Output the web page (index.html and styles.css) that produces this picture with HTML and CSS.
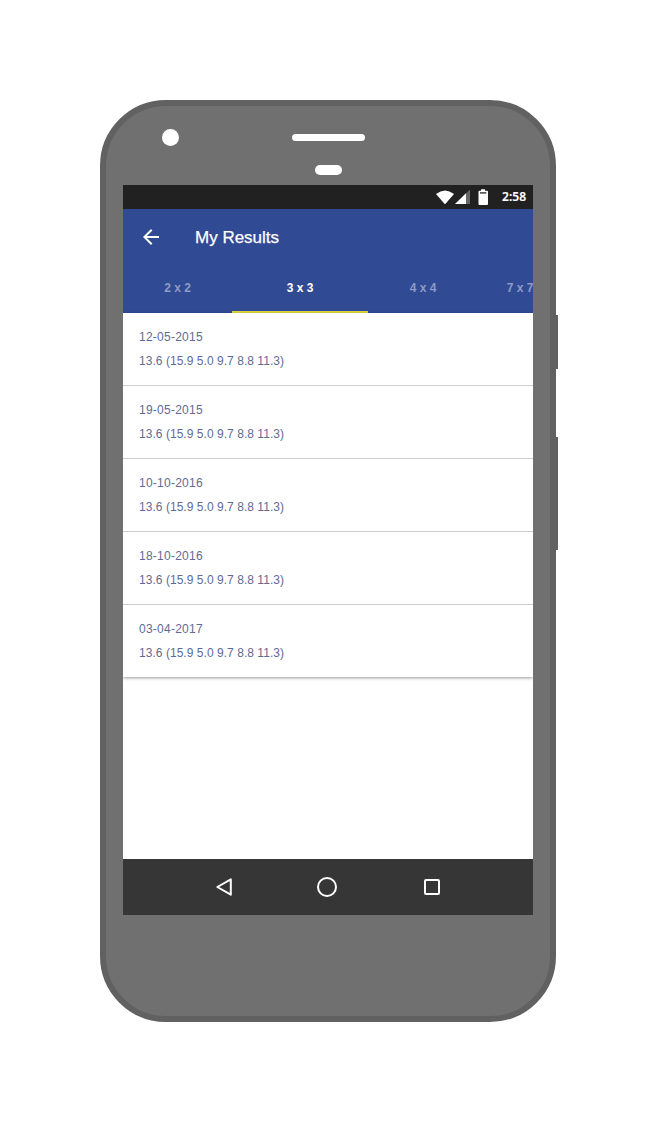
FILE: index.html
```html
<!DOCTYPE html>
<html lang="en">
<head>
<meta charset="utf-8">
<title>My Results</title>
<link rel="stylesheet" href="styles.css">
</head>
<body>
<div class="phone">
  <span class="camera"></span>
  <span class="speaker"></span>
  <span class="sensor"></span>
  <span class="side-button power"></span>
  <span class="side-button volume"></span>
  <main class="screen">
    <div class="status-bar">
      <svg class="status-icons" width="54" height="18" viewBox="0 0 54 18">
        <path fill="#fff" d="M0 6Q9 -1.100 18 6L9.300 16H8.700Z"/>
        <path fill="#666" d="M34 1.500V16H19.500Z"/>
        <path fill="#fff" d="M19 16L30 5.200V16Z"/>
        <path fill="#fff" d="M45 1.300h4v1.500h2a1 1 0 0 1 1 1V16a1 1 0 0 1-1 1h-7.500a1 1 0 0 1-1-1V3.800a1 1 0 0 1 1-1H45z"/>
        <path fill="#333" d="M44 4.200h6.300v1.400H44z"/>
      </svg>
      <span class="time">2:58</span>
    </div>
    <header class="app-bar">
      <div class="toolbar">
        <svg class="back" width="24" height="24" viewBox="0 0 24 24"><path fill="#fff" d="M20 11H7.830l5.590-5.590L12 4l-8 8 8 8 1.410-1.410L7.830 13H20v-2z"/></svg>
        <h1 class="title">My Results</h1>
      </div>
      <nav class="tabs">
        <span class="tab">2 x 2</span>
        <span class="tab active">3 x 3</span>
        <span class="tab">4 x 4</span>
        <span class="tab last">7 x 7</span>
      </nav>
    </header>
    <ul class="results">
      <li class="result"><span class="date">12-05-2015</span><span class="times">13.6 (15.9 5.0 9.7 8.8 11.3)</span></li>
      <li class="result"><span class="date">19-05-2015</span><span class="times">13.6 (15.9 5.0 9.7 8.8 11.3)</span></li>
      <li class="result"><span class="date">10-10-2016</span><span class="times">13.6 (15.9 5.0 9.7 8.8 11.3)</span></li>
      <li class="result"><span class="date">18-10-2016</span><span class="times">13.6 (15.9 5.0 9.7 8.8 11.3)</span></li>
      <li class="result"><span class="date">03-04-2017</span><span class="times">13.6 (15.9 5.0 9.7 8.8 11.3)</span></li>
    </ul>
    <footer class="nav-bar">
      <svg width="24" height="24" viewBox="0 0 24 24"><path fill="none" stroke="#fff" stroke-width="2" stroke-linejoin="round" d="M7.300 12L20.800 4.300V19.700Z"/></svg>
      <svg width="24" height="24" viewBox="0 0 24 24"><circle cx="12" cy="12" r="9" fill="none" stroke="#fff" stroke-width="2"/></svg>
      <svg width="24" height="24" viewBox="0 0 24 24"><rect x="5" y="5" width="14" height="14" rx="1" fill="none" stroke="#fff" stroke-width="2"/></svg>
    </footer>
  </main>
</div>
</body>
</html>
```
FILE: styles.css
```css
* { box-sizing: border-box; }
body {
  margin: 0;
  padding: 100px;
  background: #fff;
  font-family: "Liberation Sans", Arial, sans-serif;
}
.phone {
  position: relative;
  width: 456px;
  height: 922px;
  padding: 79px 17px 0;
  border: 6px solid #616161;
  border-radius: 66px;
  background: #707070;
}
.camera, .speaker, .sensor {
  position: absolute;
  background: #fff;
  border-radius: 9px;
}
.camera { left: 56px; top: 23px; width: 17px; height: 17px; }
.speaker { left: 186px; top: 28px; width: 73px; height: 7px; }
.sensor { left: 209px; top: 59px; width: 27px; height: 10px; }
.side-button {
  position: absolute;
  right: -8px;
  width: 2px;
  background: #616161;
}
.power { top: 209px; height: 54px; }
.volume { top: 331px; height: 113px; }
.screen {
  display: flex;
  flex-direction: column;
  width: 410px;
  height: 730px;
  overflow: hidden;
  background: #fff;
}
.status-bar {
  display: flex;
  align-items: center;
  justify-content: flex-end;
  gap: 12px;
  height: 24px;
  padding-right: 7px;
  background: #212121;
}
.time {
  color: #fff;
  font: 600 12px/24px "Noto Sans", "Open Sans", sans-serif;
  -webkit-text-stroke: 0.15px #fff;
}
.app-bar { height: 104px; background: #304a94; color: #fff; }
.toolbar {
  display: flex;
  align-items: center;
  gap: 32px;
  height: 56px;
  padding-left: 16px;
}
.title {
  margin: 0;
  padding-top: 2px;
  font-size: 17px;
  font-weight: 400;
  -webkit-text-stroke: 0.25px #fff;
}
.tabs { display: flex; height: 48px; }
.tab {
  flex: 0 0 110px;
  color: #8d9bc5;
  font-size: 12px;
  font-weight: 700;
  line-height: 46px;
  text-align: center;
}
.tab:first-child { flex-basis: 109px; }
.tab.active {
  flex-basis: 136px;
  color: #fff;
  border-bottom: 2px solid #dfd63c;
}
.tab.last { flex-basis: 84px; }
.results {
  margin: 0;
  padding: 0;
  list-style: none;
  box-shadow: 0 1px 3px rgba(0, 0, 0, 0.4);
}
.result {
  display: flex;
  flex-direction: column;
  height: 73px;
  padding: 12px 16px;
  border-bottom: 1px solid #cfcfcf;
  color: #5f6b95;
  font-size: 12px;
  line-height: 24px;
}
.result:last-child { height: 72px; border-bottom: 0; }
.date { letter-spacing: 0.25px; }
.times { letter-spacing: 0.04px; }
.nav-bar {
  display: flex;
  justify-content: center;
  align-items: center;
  gap: 81px;
  height: 56px;
  margin-top: auto;
  padding-right: 2px;
  background: #363636;
}
```
